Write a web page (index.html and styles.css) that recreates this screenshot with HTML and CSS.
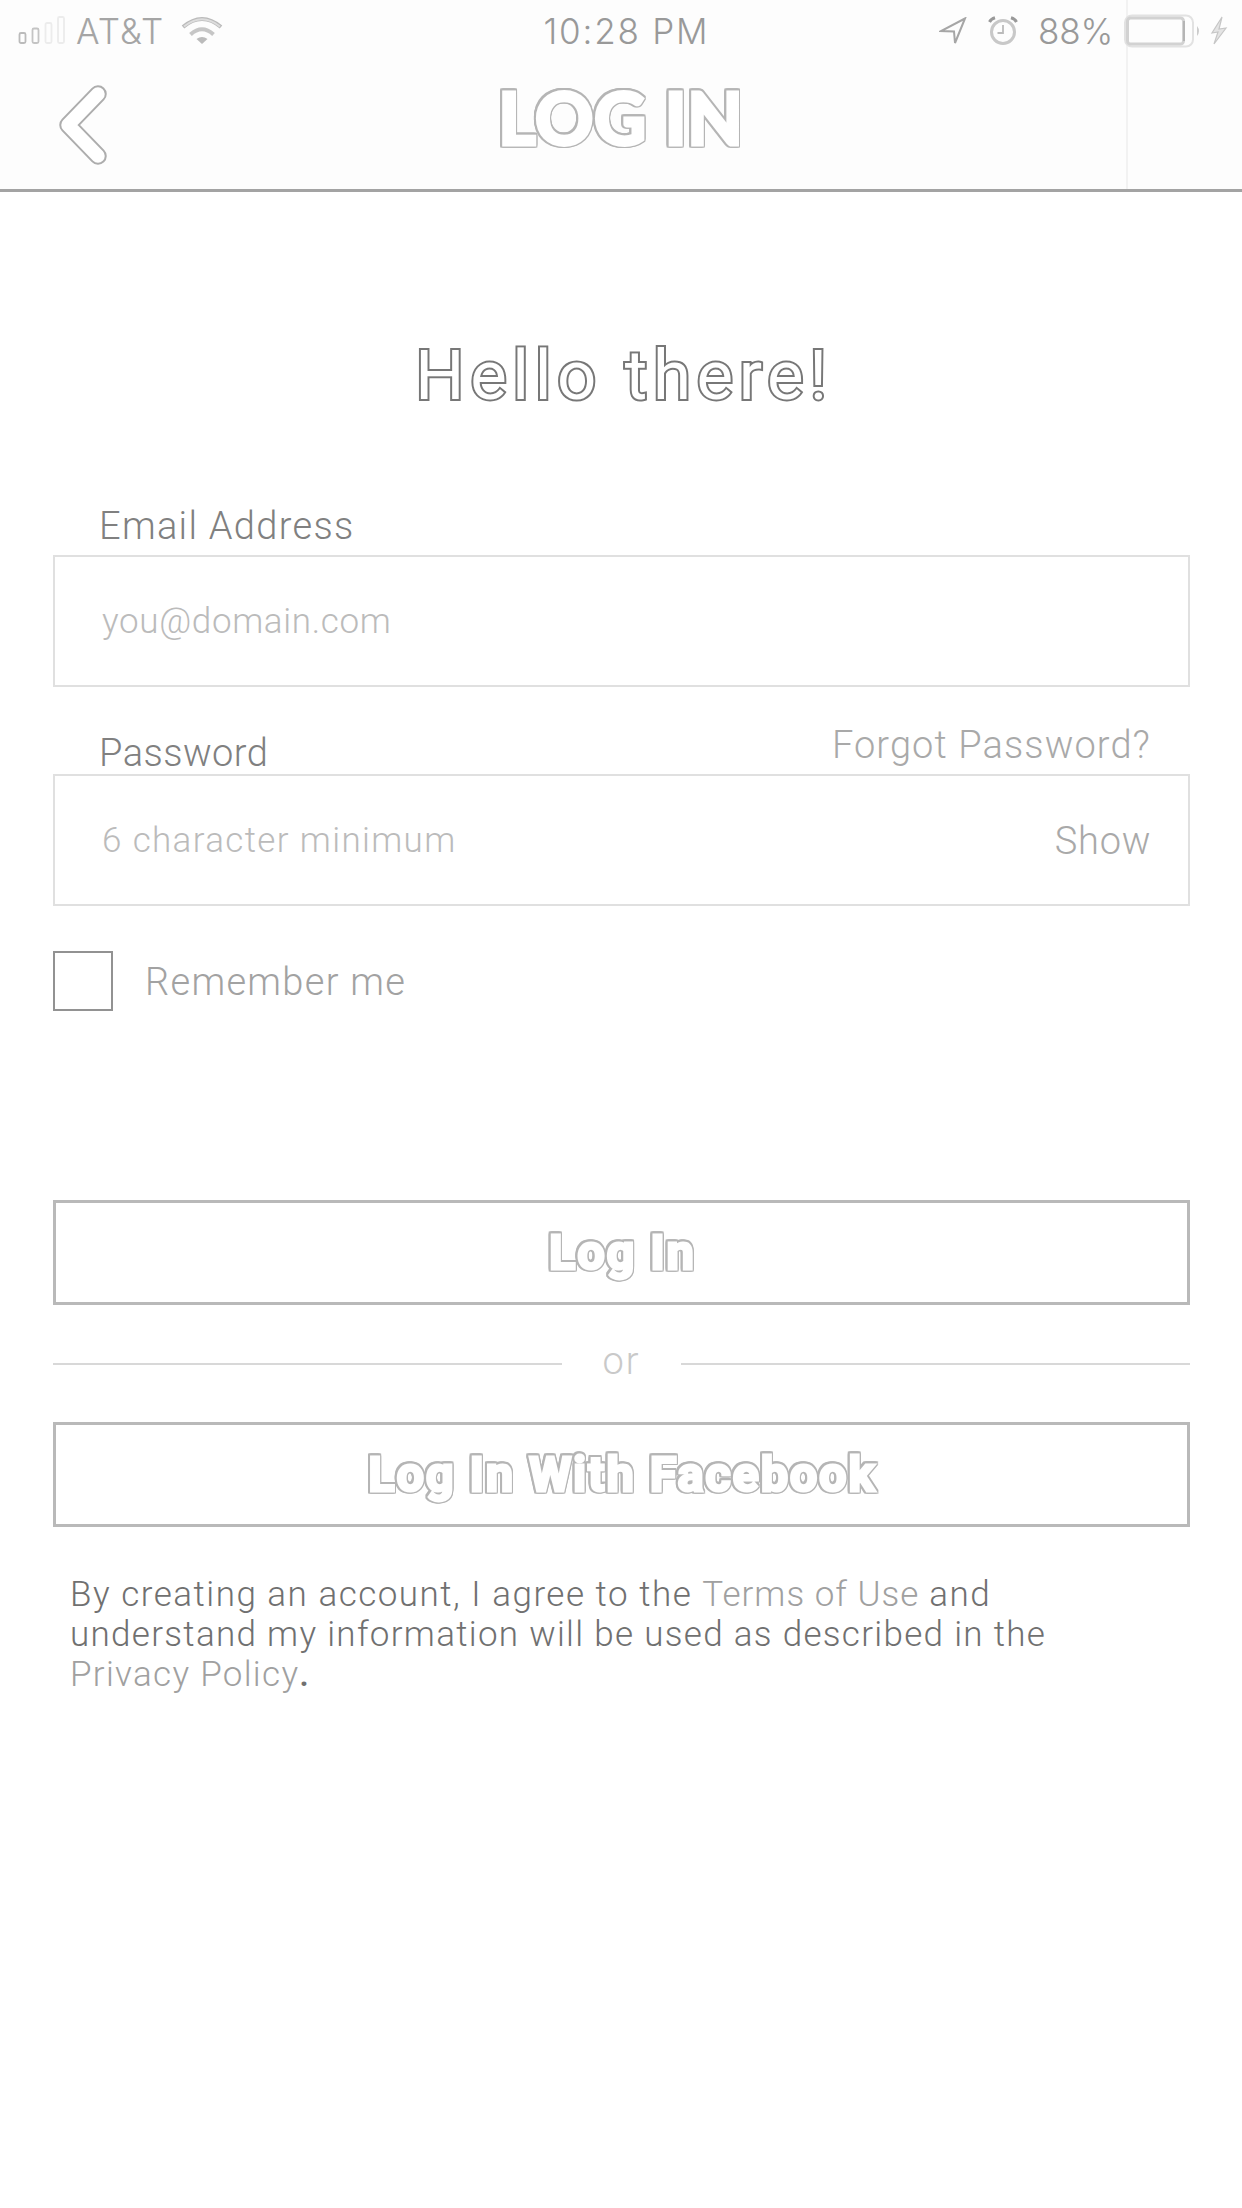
FILE: index.html
```html
<!DOCTYPE html>
<html lang="en">
<head>
<meta charset="utf-8">
<title>Log In</title>
<link rel="stylesheet" href="styles.css">
</head>
<body>
<header class="header">
  <div class="status">
    <div class="status-left">
      <svg class="signal" width="50" height="32" viewBox="0 0 50 32" fill="none" stroke-width="1.800"><rect x="2.500" y="18" width="6" height="10" rx="1.500" stroke="#bbb"/><rect x="15.500" y="13.500" width="6" height="14.500" rx="1.500" stroke="#c4c4c4"/><rect x="28.500" y="8" width="6" height="20" rx="1.500" stroke="#ececec"/><rect x="41" y="2" width="6" height="26" rx="1.500" stroke="#ececec"/></svg>
      <span class="carrier">AT&amp;T</span>
      <svg class="wifi" width="42" height="30" viewBox="0 0 42 30" fill="none" stroke="#c6c6c6" stroke-width="4"><path d="M2 11Q21-5 40 11" stroke="#bbb"/><path d="M3 10.500Q21-4 39 10.500" stroke="#ddd" stroke-width="2"/><path d="M9.500 18.500Q21 8 32.500 18.500"/><path d="M15.500 23Q21 19 26.500 23L21 28Z" fill="#bbb" stroke="none"/></svg>
    </div>
    <span class="time">10:28 PM</span>
    <div class="status-right">
      <svg class="location" width="28" height="28" viewBox="0 0 28 28" fill="none" stroke="#a6a6a6" stroke-width="2"><path d="M26 1.500L2 14l13 .5L16 26Z"/></svg>
      <svg class="alarm" width="30" height="30" viewBox="0 0 30 30" fill="none"><circle cx="15" cy="16" r="11.500" stroke="#c8c8c8" stroke-width="3"/><path d="M15 9v8H9.500" stroke="#bbb" stroke-width="1.800"/><path d="M1.500 6Q3 3 7 1.800M28.500 6Q27 3 23 1.800" stroke="#999" stroke-width="3"/></svg>
      <span class="percent">88%</span>
      <svg class="battery" width="78" height="34" viewBox="0 0 78 34" fill="none"><rect x="1" y="1.500" width="68" height="31" rx="7" stroke="#e2e2e2" stroke-width="2"/><rect x="3.500" y="4" width="56" height="26" rx="3" stroke="#d2d2d2" stroke-width="3"/><path d="M60 7v20" stroke="#b5b5b5" stroke-width="2"/><path d="M73 12q4 5 0 10z" fill="#ccc"/></svg>
      <svg class="bolt" width="18" height="32" viewBox="0 0 18 32" fill="#e4e4e4" stroke="#c6c6c6" stroke-width="1.200"><path d="M12 2L2 18l6-1L4 29 16 13l-7 1Z"/></svg>
    </div>
  </div>
  <div class="nav">
    <svg class="back" width="52" height="82" viewBox="0 0 52 82" fill="none" stroke-linecap="round" stroke-linejoin="round"><path d="M41 10L11 41 41 72" stroke="#adadad" stroke-width="17.500"/><path d="M41 10L11 41 41 72" stroke="#fff" stroke-width="13.500"/></svg>
    <h1 class="title">LOG IN</h1>
  </div>
</header>
<main class="content">
  <h2 class="greeting">Hello there!</h2>
  <div class="label-row"><span class="label">Email Address</span></div>
  <div class="field"><span class="hint hint-email">you@domain.com</span></div>
  <div class="label-row label-row-password"><span class="label label-password">Password</span><a class="link forgot">Forgot Password?</a></div>
  <div class="field"><span class="hint">6 character minimum</span><a class="link show">Show</a></div>
  <div class="remember"><span class="checkbox"></span><span class="remember-text">Remember me</span></div>
  <div class="button"><span class="button-text">Log In</span></div>
  <div class="divider"><span class="or">or</span></div>
  <div class="button"><span class="button-text">Log In With Facebook</span></div>
  <p class="legal"><span class="legal-first">By creating an account, I agree to the <a class="terms terms-use">Terms of Use</a> and</span><br>understand my information will be used as described in the<br><a class="terms">Privacy Policy</a><b class="stop">.</b></p>
</main>
</body>
</html>
```
FILE: styles.css
```css
* { box-sizing: border-box; }
body { margin: 0; min-height: 2208px; background: #fff; color: #808080; font-family: Roboto, sans-serif; font-weight: 300; }
h1, h2, p { margin: 0; }
svg { display: block; flex: none; }
.header {
  height: 192px; border-bottom: 3px solid #a3a3a3;
  background: linear-gradient(#f2f2f2, #f2f2f2) 1126px 0 / 2px 100% no-repeat #fdfdfd;
}
.status { height: 62px; display: grid; grid-template-columns: 1fr auto 1fr; align-items: center; padding: 0 14px 0 17px; font: 300 35px/40px Inter, sans-serif; color: #a5a5a5; }
.status-left, .status-right { display: flex; align-items: center; }
.status-right { justify-content: flex-end; }
.carrier { margin-left: 9px; letter-spacing: 1.2px; }
.time { letter-spacing: 1.8px; padding-left: 8px; color: #999; }
.percent { letter-spacing: -0.2px; color: #999; }
.wifi { margin-left: 16px; }
.alarm { margin: 0 20px 0 21px; }
.battery { margin: 0 8px 0 11px; }
.nav { display: grid; grid-template-columns: 160px 1fr 160px; }
.back { margin: 22px 0 0 57px; }
.title { justify-self: center; font: 900 72px/110px Lato, sans-serif; letter-spacing: 0.7px; }
.title, .button-text {
  color: #fff; -webkit-text-stroke: 3px #fff;
  filter: drop-shadow(1.3px 0 #b5b5b5) drop-shadow(-1.3px 0 #b5b5b5) drop-shadow(0 1.3px #b5b5b5) drop-shadow(0 -1.3px #b5b5b5);
}
.content { padding: 0 52px 0 53px; }
.greeting { padding-top: 144px; height: 313px; text-align: center; font-size: 69px; line-height: 80px; font-weight: 400; letter-spacing: 5.6px; text-indent: 5px; color: #fff; -webkit-text-stroke: 4px #777; paint-order: stroke fill; }
.label-row { display: flex; justify-content: space-between; height: 50px; padding: 1px 41px 0 46px; font-size: 38px; line-height: 40px; letter-spacing: 1.3px; }
.label-row-password { height: 87px; padding-top: 46px; }
.label-password { letter-spacing: 0.45px; }
.forgot { margin: -8px -2px 0 0; letter-spacing: 1.1px; }
.link { color: #a9a9a9; }
.field { display: flex; align-items: center; justify-content: space-between; height: 132px; border: 2px solid #e0e0e0; padding: 0 37px 0 47px; font-size: 38px; }
.hint { font-size: 35px; color: #bbb; letter-spacing: 1.35px; }
.hint-email { letter-spacing: 0.65px; }
.show { padding-top: 2px; letter-spacing: 0.7px; }
.remember { display: flex; align-items: center; margin: 45px 0 189px; font-size: 38px; letter-spacing: 1.3px; color: #a2a2a2; }
.remember-text { padding-top: 2px; }
.checkbox { width: 60px; height: 60px; border: 2px solid #929292; margin-right: 32px; }
.button { display: flex; align-items: center; justify-content: center; height: 105px; border: 3px solid #b9b9b9; }
.button-text { font-size: 48px; line-height: 56px; font-weight: 700; letter-spacing: 2.2px; padding-left: 2px; }
.divider { display: flex; align-items: center; height: 117px; font-size: 38px; letter-spacing: 2px; color: #c9c9c9; }
.divider::before, .divider::after { content: ""; flex: 1; height: 2px; background: #d8d8d8; }
.or { margin: 0 40px; padding-bottom: 6px; }
.legal { margin: 48px 0 0 17px; font-size: 35px; line-height: 40px; letter-spacing: 1.3px; color: #707070; white-space: nowrap; }
.legal-first { letter-spacing: 1.5px; }
.terms { color: #a0a0a0; }
.terms-use { letter-spacing: 1px; }
.stop { font-weight: 500; }
```
